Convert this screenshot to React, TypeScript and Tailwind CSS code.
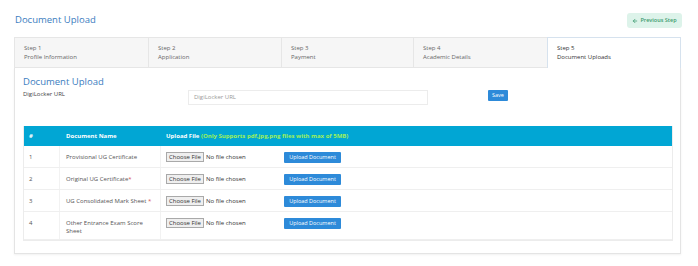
import { ArrowLeft } from "lucide-react";

const TABS = [
  { step: "Step 1", name: "Profile Information" },
  { step: "Step 2", name: "Application" },
  { step: "Step 3", name: "Payment" },
  { step: "Step 4", name: "Academic Details" },
  { step: "Step 5", name: "Document Uploads" },
];

const DOCS = [
  { no: 1, name: "Provisional UG Certificate", required: false },
  { no: 2, name: "Original UG Certificate", required: true },
  { no: 3, name: "UG Consolidated Mark Sheet ", required: true },
  { no: 4, name: "Other Entrance Exam Score Sheet", required: false },
];

function FileRow({ doc }: { doc: (typeof DOCS)[number] }) {
  return (
    <div
      className={`grid grid-cols-[36px_101px_1fr] border-b border-[#efefef] text-[6px] text-[#555] ${
        doc.no === 4 ? "h-[28px]" : "h-[22px]"
      }`}
    >
      <div className="border-r border-[#f2f2f2] pl-[5px] pt-[7px]">{doc.no}</div>
      <div className="border-r border-[#f2f2f2] pl-[6px] pr-[6px] pt-[7px] leading-[8px]">
        {doc.name}
        {doc.required && <span className="text-[#d9534f]">*</span>}
      </div>
      <div className="flex items-start pl-[5px] pt-[6px]">
        <div className="flex h-[10px] w-[81px] items-center">
          <span className="flex h-[10px] items-center border border-[#a9a9a9] bg-[#efefef] px-[2px] text-[#333]">
            Choose File
          </span>
          <span className="ml-[2px] text-[#333]">No file chosen</span>
        </div>
        <button className="ml-[37px] h-[11px] w-[57px] rounded-[1px] bg-[#2d8ad9] text-[5.5px] text-white">
          Upload Document
        </button>
      </div>
    </div>
  );
}

export default function App() {
  return (
    <div className="h-[266px] w-[698px] bg-white font-['Open_Sans',sans-serif]">
      <div className="flex items-start justify-between pl-[15px] pr-[16px] pt-[13px]">
        <h1 className="text-[9.5px] leading-[14px] text-[#3b7dc0]">Document Upload</h1>
        <button className="flex h-[15px] w-[55px] items-center justify-center gap-[2px] rounded-[3px] bg-[#ddf3ea] text-[5.5px] font-semibold text-[#3a9a6d]">
          <ArrowLeft size={6} strokeWidth={3} />
          Previous Step
        </button>
      </div>

      <div className="mx-[14px] mt-[9px] w-[667px]">
        <div className="grid h-[31px] grid-cols-[134px_133px_132px_134px_1fr]">
          {TABS.map((t, i) => {
            const active = i === 4;
            return (
              <div
                key={t.step}
                className={`flex flex-col justify-center pl-[9px] text-[6px] leading-[9px] ${
                  active
                    ? "border border-b-0 border-[#d6e2ee] bg-white text-[#333]"
                    : "border-l border-t border-b border-[#e6e6e6] bg-[#f6f6f6] text-[#666]"
                }`}
              >
                <span>{t.step}</span>
                <span>{t.name}</span>
              </div>
            );
          })}
        </div>

        <div className="h-[186px] border border-t-0 border-[#e4e4e4] px-[8px] shadow-[0_1px_2px_rgba(0,0,0,0.06)]">
          <h2 className="pt-[7px] text-[9.5px] leading-[14px] text-[#3b7dc0]">Document Upload</h2>
          <div className="flex items-start">
            <label className="w-[165px] pt-[1px] text-[6px] text-[#444]">DigiLocker URL</label>
            <div className="mt-[1px] flex h-[15px] w-[240px] items-center border border-[#ececec] pl-[5px] text-[6px] text-[#999]">
              DigiLocker URL
            </div>
            <button className="ml-[60px] mt-[1px] h-[11px] w-[20px] rounded-[1px] bg-[#2d8ad9] text-[5.5px] text-white">
              Save
            </button>
          </div>

          <div className="mt-[21px] w-[650px] border-x border-b border-[#ececec]">
            <div className="grid h-[20px] grid-cols-[36px_101px_1fr] items-center bg-[#01a6d4] text-[6px] font-bold text-white">
              <div className="pl-[5px]">#</div>
              <div className="pl-[6px]">Document Name</div>
              <div className="pl-[5px]">
                Upload File <span className="text-[#9ff05a]">(Only Supports pdf,jpg,png files with max of 5MB)</span>
              </div>
            </div>
            {DOCS.map((d) => (
              <FileRow key={d.no} doc={d} />
            ))}
          </div>
        </div>
      </div>
    </div>
  );
}
